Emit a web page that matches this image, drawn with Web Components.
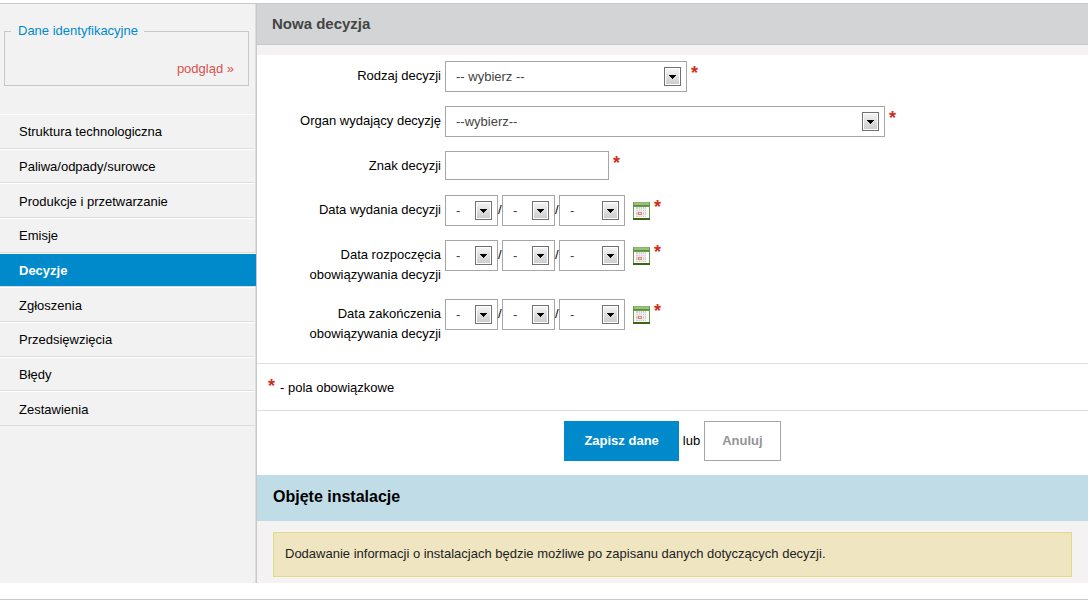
<!DOCTYPE html>
<html lang="pl">
<head>
<meta charset="utf-8">
<meta name="viewport" content="width=device-width, initial-scale=1">
<title>Nowa decyzja</title>
<style>
  body {
    margin: 0;
    background: #fff;
    color: #000;
    font: 13px/20px "Liberation Sans", Arial, sans-serif;
    --blue: #008acc;
    --line: #c8c8c8;
    --hairline: #dddddd;
    --field: #a6a6a6;
  }
</style>
</head>
<body>
<app-page></app-page>

<script>
  const define = (name, html) => {
    const template = document.createElement('template');
    template.innerHTML = html;
    customElements.define(name, class extends HTMLElement {
      constructor() {
        super();
        this.attachShadow({ mode: 'open' }).append(template.content.cloneNode(true));
      }
    });
  };

  /* Red asterisk that marks an obligatory field */
  define('required-mark', `
    <style>
      :host { display: block; color: #cc2f1a; font-size: 18px; font-weight: bold; line-height: 20px; }
    </style>
    <span>*</span>`);

  /* Frame and arrow button around a native select */
  define('select-box', `
    <style>
      :host { display: grid; box-sizing: border-box; height: 31px; border: 1px solid var(--field); background: #fff; }
      ::slotted(select) {
        grid-area: 1 / 1; appearance: none; width: 100%; height: 29px; margin: 0; padding: 0 24px 0 10px;
        border: 0; border-radius: 0; background: none; color: #444; font: inherit;
      }
      .arrow {
        grid-area: 1 / 1; place-self: center end; box-sizing: border-box; width: 17px; height: 19px;
        margin-right: 5px; border: 1px solid #707070; padding: 1px; pointer-events: none;
        background: linear-gradient(#f3f3f3, #cdcdcd) content-box, #fff;
      }
      svg { display: block; width: 13px; height: 15px; }
    </style>
    <slot></slot>
    <span class="arrow" aria-hidden="true">
      <svg viewBox="0 0 13 15" shape-rendering="crispEdges"><path d="M3 6h7v1h-1v1h-1v1h-1v1h-1v-1h-1v-1h-1v-1h-1z"/></svg>
    </span>`);

  define('calendar-icon', `
    <style>
      :host { display: block; width: 17px; height: 18px; }
      svg { display: block; width: 17px; height: 18px; }
    </style>
    <svg viewBox="0 0 17 18" shape-rendering="crispEdges" aria-hidden="true">
      <path fill="#6f9c50" d="M0 0h17v18H0z"/>
      <path fill="#8bb568" d="M1 0h15v1H1z"/>
      <path fill="#9cc07e" d="M1 1h15v2H1z"/>
      <path fill="#5f8f3c" d="M0 3h17v1H0z"/>
      <path fill="#fbfbfb" d="M1 5h15v11H1z"/>
      <path fill="#3f6418" d="M0 16h17v2H0z"/>
      <path fill="#cfcfcf" d="M3 5h10v10H3z"/>
      <path fill="#ececec" d="M5 5h1v10H5zM7 5h1v10H7zM9 5h1v10H9zM11 5h1v10h-1zM3 7h10v1H3zM3 9h10v1H3zM3 13h10v1H3z"/>
      <path fill="#e48b76" d="M5 10h4v3H5z"/>
      <path fill="#f5d0c6" d="M6 11h2v1H6z"/>
    </svg>`);

  /* One line of the form: label on the left, control and mark on the right */
  define('form-row', `
    <style>
      :host { display: grid; grid-template-columns: 168px 1fr; column-gap: 4px; min-height: 30px; }
      .label { padding-top: 5px; text-align: right; }
      .control { display: flex; align-items: flex-start; }
      required-mark { padding: 2px 0 0 4px; }
    </style>
    <div class="label"><slot name="label"></slot></div>
    <div class="control"><slot></slot><required-mark></required-mark></div>`);

  define('side-link', `
    <style>
      :host { display: grid; align-items: center; border-top: 1px solid #fff; border-bottom: 1px solid var(--hairline); padding: 2px 0 0 19px; }
      :host([current]) { margin-right: -1px; background: var(--blue) padding-box; font-weight: bold; --ink: #fff; }
      ::slotted(a) { color: var(--ink, #000); text-decoration: none; }
    </style>
    <slot></slot>`);

  define('side-bar', `
    <style>
      :host { display: block; background: #f2f2f2; border-right: 1px solid var(--line); }
      .inner { height: 100%; box-sizing: border-box; border-right: 1px solid var(--hairline); padding-top: 17px; }
      fieldset { margin: 0 6px 28px 4px; padding: 18px 14px 6px 6px; border: 1px solid var(--line); text-align: right; }
      legend { padding: 0 6px 0 7px; color: var(--blue); text-align: left; }
      fieldset a { color: #d9524c; text-decoration: none; }
      nav { display: grid; grid-auto-rows: 1fr; min-height: 312px; }
    </style>
    <div class="inner">
      <fieldset><legend>Dane identyfikacyjne</legend><a href="#podglad">podgląd »</a></fieldset>
      <nav>
        <side-link><a href="#struktura">Struktura technologiczna</a></side-link>
        <side-link><a href="#paliwa">Paliwa/odpady/surowce</a></side-link>
        <side-link><a href="#produkcje">Produkcje i przetwarzanie</a></side-link>
        <side-link><a href="#emisje">Emisje</a></side-link>
        <side-link current><a href="#decyzje" aria-current="page">Decyzje</a></side-link>
        <side-link><a href="#zgloszenia">Zgłoszenia</a></side-link>
        <side-link><a href="#przedsiewziecia">Przedsięwzięcia</a></side-link>
        <side-link><a href="#bledy">Błędy</a></side-link>
        <side-link><a href="#zestawienia">Zestawienia</a></side-link>
      </nav>
    </div>`);

  const dateRow = (id, text) => `
    <form-row>
      <label slot="label" for="${id}-d">${text}</label>
      <select-box class="short"><select id="${id}-d"><option>-</option></select></select-box>
      <span class="slash">/</span>
      <select-box class="short"><select aria-label="Miesiąc"><option>-</option></select></select-box>
      <span class="slash">/</span>
      <select-box class="year"><select aria-label="Rok"><option>-</option></select></select-box>
      <button class="pick" type="button" aria-label="Kalendarz"><calendar-icon></calendar-icon></button>
    </form-row>`;

  define('decision-form', `
    <style>
      :host { display: block; background: #fff; }
      .fields { display: grid; row-gap: 14px; padding: 6px 16px 19px; }
      .kind { width: 242px; }
      .body { width: 440px; }
      .short { width: 53px; }
      .year { width: 66px; }
      .slash { width: 4px; padding-top: 5px; }
      .sign { box-sizing: border-box; width: 164px; height: 29px; margin: 0; padding: 0 10px; border: 1px solid var(--field); font: inherit; color: #444; }
      .pick { margin: 7px 0 0 8px; padding: 0; border: 0; background: none; }
      .legend { display: flex; border: solid var(--hairline); border-width: 1px 0; padding: 12px 11px; }
      .legend span { padding: 2px 0 0 5px; }
      .actions { display: flex; justify-content: center; align-items: center; gap: 4px; padding: 10px 0 14px; }
      .actions button { box-sizing: border-box; height: 40px; margin: 0; padding: 0 19px; border: 1px solid var(--blue); border-radius: 0; background: var(--blue); color: #fff; font: inherit; font-weight: bold; }
      .actions .cancel { padding: 0 17px; border-color: var(--field); background: #fff; color: #949494; }
    </style>
    <form>
      <div class="fields">
        <form-row>
          <label slot="label" for="kind">Rodzaj decyzji</label>
          <select-box class="kind"><select id="kind"><option>-- wybierz --</option></select></select-box>
        </form-row>
        <form-row>
          <label slot="label" for="body">Organ wydający decyzję</label>
          <select-box class="body"><select id="body"><option>--wybierz--</option></select></select-box>
        </form-row>
        <form-row>
          <label slot="label" for="sign">Znak decyzji</label>
          <input class="sign" id="sign" type="text">
        </form-row>
        ${dateRow('issued', 'Data wydania decyzji')}
        ${dateRow('from', 'Data rozpoczęcia<br>obowiązywania decyzji')}
        ${dateRow('to', 'Data zakończenia<br>obowiązywania decyzji')}
      </div>
      <div class="legend"><required-mark></required-mark><span>- pola obowiązkowe</span></div>
      <div class="actions">
        <button type="button">Zapisz dane</button>
        <span>lub</span>
        <button class="cancel" type="button">Anuluj</button>
      </div>
    </form>`);

  define('info-note', `
    <style>
      :host { display: block; border: 1px solid #e0dc84; background: #efe5c1; color: #222; padding: 11px 11px 12px; }
    </style>
    <slot></slot>`);

  define('app-page', `
    <style>
      :host { display: block; padding: 3px 4px 0 0; }
      .columns { display: grid; grid-template-columns: 257px 1fr; border-top: 1px solid var(--line); }
      h1, h2 { margin: 0; }
      h1 { padding: 10px 15px; background: #d2d4d5; border-bottom: 1px solid var(--line); color: #444; font-size: 15px; line-height: 20px; }
      h2 { padding: 12px 16px 14px; background: #c0dce6; font-size: 16px; line-height: 20px; }
      main { background: #f4f2f3; }
      decision-form { margin-top: 10px; }
      .note { padding: 11px 16px 6px; }
      footer { margin-top: 16px; border-top: 1px solid var(--line); }
    </style>
    <div class="columns">
      <side-bar></side-bar>
      <main>
        <h1>Nowa decyzja</h1>
        <decision-form></decision-form>
        <h2>Objęte instalacje</h2>
        <div class="note"><info-note>Dodawanie informacji o instalacjach będzie możliwe po zapisanu danych dotyczących decyzji.</info-note></div>
      </main>
    </div>
    <footer></footer>`);
</script>
</body>
</html>
